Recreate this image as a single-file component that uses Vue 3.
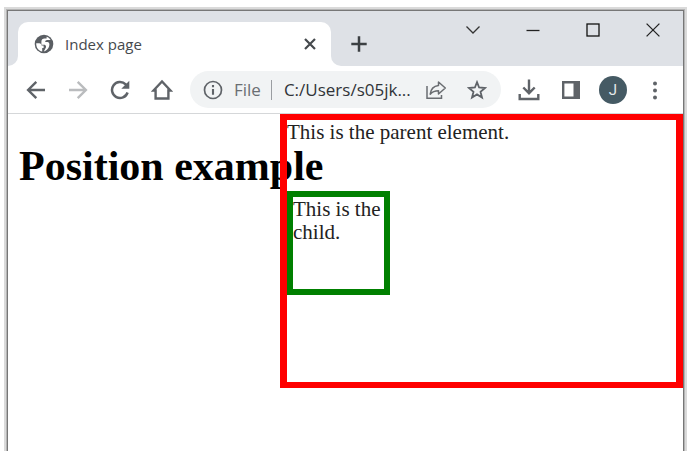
<script setup>
import { ref } from 'vue'

const title = ref('Index page')
const address = ref('C:/Users/s05jk...')
</script>

<template>
  <div class="desktop">
    <div class="window">
      <header class="tab-strip">
        <div class="strip-start"></div>
        <div class="tab">
          <svg class="globe" width="20" height="20" viewBox="0 0 20 20" aria-hidden="true">
            <circle cx="10" cy="10" r="9.300" fill="#5a5e63" />
            <path d="M2.200 9.300 H5.200 C6.800 9.300 7.500 10.300 7.600 11.600 H9.600 V14 H8.200 V17.600 C4.500 16.800 2.100 13.800 2.200 9.300 Z" fill="#fff" />
            <path d="M12.600 2.700 C14.400 3.300 15.800 4.500 16.600 6 H13.200 C12 6 11.200 6.700 11.200 8 H13.400 C14.800 8 15.400 9 15.400 10.500 C15.400 13 14 15 11.600 16.800 L9.800 17.500 L11.400 14.600 C12.400 13.600 12.300 11.300 10.800 10.800 H7.400 V7.800 C7.400 5.800 8.600 4.600 10.600 4.600 H12.600 Z" fill="#fff" />
          </svg>
          <span class="tab-title">{{ title }}</span>
          <button class="icon-button close-tab" type="button" aria-label="Close tab">
            <svg width="12" height="12" viewBox="0 0 12 12" fill="none" stroke="#45494d" stroke-width="2.200">
              <path d="M1 1 L11 11 M11 1 L1 11" />
            </svg>
          </button>
        </div>
        <div class="strip-rest">
          <button class="icon-button new-tab" type="button" aria-label="New tab">
            <svg width="16" height="16" viewBox="0 0 16 16" fill="none" stroke="#3c4043" stroke-width="2.500">
              <path d="M8 0.300 V15.700 M0.300 8 H15.700" />
            </svg>
          </button>
          <div class="window-controls">
            <button class="icon-button control" type="button" aria-label="Search tabs">
              <svg width="14" height="10" viewBox="0 0 14 10" fill="none" stroke="#333" stroke-width="1.300">
                <path d="M0.500 1.500 L7 8 L13.500 1.500" />
              </svg>
            </button>
            <button class="icon-button control" type="button" aria-label="Minimize">
              <svg width="14" height="14" viewBox="0 0 14 14" fill="none" stroke="#222" stroke-width="1.300">
                <path d="M0.500 7.500 H13.500" />
              </svg>
            </button>
            <button class="icon-button control" type="button" aria-label="Maximize">
              <svg width="14" height="14" viewBox="0 0 14 14" fill="none" stroke="#111" stroke-width="1.300">
                <rect x="1" y="1" width="12" height="12" />
              </svg>
            </button>
            <button class="icon-button control" type="button" aria-label="Close window">
              <svg width="14" height="14" viewBox="0 0 14 14" fill="none" stroke="#222" stroke-width="1.300">
                <path d="M0.600 0.600 L13.400 13.400 M13.400 0.600 L0.600 13.400" />
              </svg>
            </button>
          </div>
        </div>
      </header>

      <nav class="toolbar">
        <div class="tools">
          <button class="icon-button tool" type="button" aria-label="Back">
            <svg width="20" height="20" viewBox="0 0 20 20" fill="none" stroke="#5f6368" stroke-width="2.400">
              <path d="M19 10 H2.500 M10.300 1.800 L2.100 10 L10.300 18.200" />
            </svg>
          </button>
          <button class="icon-button tool" type="button" aria-label="Forward">
            <svg width="20" height="20" viewBox="0 0 20 20" fill="none" stroke="#babcbe" stroke-width="2.400">
              <path d="M1 10 H17.500 M9.700 1.800 L17.900 10 L9.700 18.200" />
            </svg>
          </button>
          <button class="icon-button tool" type="button" aria-label="Reload">
            <svg width="20" height="20" viewBox="0 0 20 20" fill="none">
              <path d="M17.600 12.500 A8 8 0 1 1 15.700 4.300 L17 5.700" stroke="#5f6368" stroke-width="2.500" />
              <path d="M19.300 0.800 V8.800 H11.300 Z" fill="#5f6368" />
            </svg>
          </button>
          <button class="icon-button tool" type="button" aria-label="Home">
            <svg width="22" height="22" viewBox="0 0 22 22" fill="none" stroke="#5f6368" stroke-width="2.400">
              <path d="M2.500 11.500 H4.600 V19.500 H17.400 V11.500 H19.500 L11 2.500 Z" />
            </svg>
          </button>
        </div>

        <div class="omnibox">
          <svg width="20" height="20" viewBox="0 0 20 20" fill="none" stroke="#5f6368" stroke-width="1.700" aria-hidden="true">
            <circle cx="10" cy="10" r="8.500" />
            <path d="M10 9 V14.800 M10 5 V7.200" stroke-width="2.100" />
          </svg>
          <span class="scheme">File</span>
          <input v-model="address" class="address" type="text" aria-label="Address" />
          <button class="icon-button action" type="button" aria-label="Share">
            <svg width="22" height="20" viewBox="0 0 22 20" fill="none" stroke="#6a6d71" stroke-width="1.500">
              <path d="M2 6 V18.300 H16.500 V15" />
              <path d="M13.500 2 L20.300 8 L13.500 14 V10.700 C9.800 10.700 7.400 11.600 5.200 14.200 C5.700 9.300 8.600 5.900 13.500 5.400 Z" stroke-linejoin="round" />
            </svg>
          </button>
          <button class="icon-button action" type="button" aria-label="Bookmark">
            <svg width="20" height="20" viewBox="0 0 20 20" fill="none" stroke="#5f6368" stroke-width="1.800">
              <path d="M10 2.200 L12.100 7.500 L18 8 L13.500 11.800 L15 17.500 L10 14.400 L5 17.500 L6.500 11.800 L2 8 L7.900 7.500 Z" />
            </svg>
          </button>
        </div>

        <div class="tools">
          <button class="icon-button tool" type="button" aria-label="Downloads">
            <svg width="22" height="22" viewBox="0 0 22 22" fill="none" stroke="#5f6368" stroke-width="2.400">
              <path d="M11 0.500 V13.500 M5.300 8.500 L11 14.200 L16.700 8.500 M1.700 15 V20 H20.300 V15" />
            </svg>
          </button>
          <button class="icon-button tool" type="button" aria-label="Side panel">
            <svg width="20" height="20" viewBox="0 0 20 20">
              <path d="M1 1 H19 V19 H1 Z M3.400 3.400 V16.600 H12.500 V3.400 Z" fill="#5f6368" fill-rule="evenodd" />
            </svg>
          </button>
          <button class="icon-button tool" type="button" aria-label="Profile">
            <span class="avatar">J</span>
          </button>
          <button class="icon-button tool" type="button" aria-label="Menu">
            <svg width="6" height="20" viewBox="0 0 6 20" fill="#5f6368">
              <circle cx="3" cy="3.500" r="2" />
              <circle cx="3" cy="10.500" r="2" />
              <circle cx="3" cy="17.500" r="2" />
            </svg>
          </button>
        </div>
      </nav>

      <main class="page">
        <h1>Position example</h1>
        <div class="parent">
          This is the parent element.
          <div class="child">This is the child.</div>
        </div>
      </main>
    </div>
  </div>
</template>

<style>
body {
  margin: 0;
  background: #fff;
}
</style>

<style scoped>
.desktop {
  box-sizing: border-box;
  display: flex;
  min-height: 100vh;
  padding: 10px 8px 0 7px;
  overflow: hidden;
  font-family: "Open Sans", "Noto Sans", sans-serif;
}

.window {
  flex: 1;
  display: flex;
  flex-direction: column;
  min-width: 0;
  border: 1px solid #777;
  border-bottom: 0;
  box-shadow: 0 0 0 1px #b4b4b4, 0 0 0 3px #dadada;
  background: #fff;
}

.icon-button {
  display: flex;
  align-items: center;
  justify-content: center;
  padding: 0;
  border: 0;
  background: none;
}

.tab-strip {
  display: flex;
  height: 55px;
}

.strip-start {
  width: 10px;
  background: #dee1e6;
  border-bottom-right-radius: 10px;
}

.tab {
  display: flex;
  align-items: center;
  box-sizing: border-box;
  width: 313px;
  padding: 11px 12px 0 16px;
  background: linear-gradient(#dee1e6, #dee1e6) top / 100% 24px no-repeat;
  position: relative;
  z-index: 0;
}

.tab::before {
  content: "";
  position: absolute;
  inset: 11px 0 0;
  z-index: -1;
  border-radius: 10px 10px 0 0;
  background: #fff;
}

.tab-title {
  flex: 1;
  margin-left: 11px;
  font-size: 15px;
  line-height: 20px;
  color: #45494d;
}

.close-tab {
  width: 18px;
  height: 18px;
}

.strip-rest {
  flex: 1;
  display: flex;
  justify-content: space-between;
  background: #dee1e6;
  border-bottom-left-radius: 10px;
}

.new-tab {
  width: 32px;
  margin: 11px 0 0 12px;
}

.window-controls {
  display: flex;
  height: 37px;
}

.control {
  width: 60px;
}

.toolbar {
  display: flex;
  align-items: center;
  gap: 12px;
  height: 47px;
  padding: 0 12px;
  border-bottom: 1px solid #d5d7d9;
}

.tools {
  display: flex;
  gap: 10px;
}

.tool {
  width: 32px;
  height: 32px;
}

.omnibox {
  flex: 1;
  display: flex;
  align-items: center;
  box-sizing: border-box;
  min-width: 0;
  height: 37px;
  padding: 0 8px 0 13px;
  border-radius: 19px;
  background: #f1f3f4;
  font-size: 17px;
}

.scheme {
  margin-left: 11px;
  padding-right: 10px;
  border-right: 1px solid #9a9da1;
  line-height: 20px;
  color: #6a6e73;
}

.address {
  flex: 1;
  min-width: 0;
  padding: 0 0 0 12px;
  border: 0;
  outline: 0;
  background: none;
  font: inherit;
  line-height: 20px;
  color: #303338;
}

.action {
  width: 32px;
  height: 32px;
}

.action + .action {
  margin-left: 9px;
}

.avatar {
  width: 28px;
  height: 28px;
  flex: none;
  border-radius: 50%;
  background: #455a64;
  color: #e4e9eb;
  font: 15px/28px Roboto, sans-serif;
  text-align: center;
}

.page {
  flex: 1;
  position: relative;
  padding: 0 11px;
  font-family: "Liberation Serif", serif;
  font-size: 21px;
  line-height: 23px;
  color: #222;
}

h1 {
  margin: 28px 0;
  font-size: 42px;
  line-height: 48px;
  color: #000;
}

.parent {
  position: absolute;
  top: 0;
  right: 0;
  box-sizing: border-box;
  width: 403px;
  height: 274px;
  padding-top: 1px;
  border: solid #f00;
  border-width: 6px 7px;
}

.child {
  box-sizing: border-box;
  width: 103px;
  height: 104px;
  margin-top: 47px;
  padding-top: 1px;
  border: 6px solid #008000;
}
</style>
